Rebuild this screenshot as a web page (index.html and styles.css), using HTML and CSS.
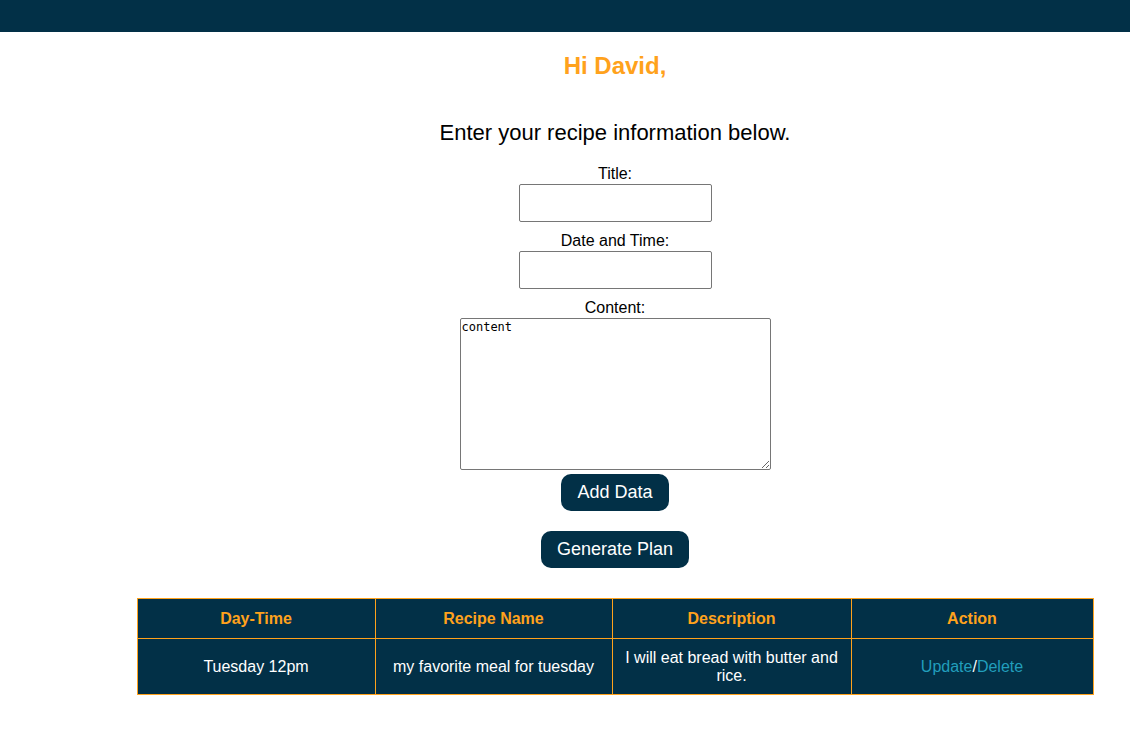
FILE: index.html
```html
<!DOCTYPE html>
<html>
<head>
<meta charset="utf-8">
<link rel="stylesheet" href="styles.css">
</head>
<body>
<div class="topbar"></div>
<main class="main">
  <h2 class="greeting">Hi David,</h2>
  <p class="intro">Enter your recipe information below.</p>
  <form class="form">
    <label class="label">Title:</label>
    <input class="field" type="text">
    <label class="label">Date and Time:</label>
    <input class="field" type="text">
    <label class="label">Content:</label>
    <textarea class="area">content</textarea>
    <button class="btn btn-add" type="button">Add Data</button>
    <button class="btn btn-plan" type="button">Generate Plan</button>
  </form>
  <table class="plan">
    <colgroup>
      <col class="c1"><col class="c2"><col class="c3"><col class="c4">
    </colgroup>
    <thead>
      <tr><th>Day-Time</th><th>Recipe Name</th><th>Description</th><th>Action</th></tr>
    </thead>
    <tbody>
      <tr>
        <td>Tuesday 12pm</td>
        <td>my favorite meal for tuesday</td>
        <td>I will eat bread with butter and rice.</td>
        <td><a class="link" href="#">Update</a>/<a class="link" href="#">Delete</a></td>
      </tr>
    </tbody>
  </table>
</main>
</body>
</html>
```

FILE: styles.css
```css
html, body {
  margin: 0;
  padding: 0;
  background: #ffffff;
  font-family: "Liberation Sans", Arial, sans-serif;
  color: #000;
}
.topbar {
  height: 32px;
  background: #023047;
}
.main {
  padding-left: 100px;
  display: flex;
  flex-direction: column;
  align-items: center;
}
.greeting {
  margin: 20px 0 0;
  font-size: 24px;
  line-height: 28px;
  font-weight: bold;
  color: #ffa21c;
}
.intro {
  margin: 40px 0 0;
  font-size: 22px;
  line-height: 25px;
}
.form {
  display: flex;
  flex-direction: column;
  align-items: center;
  margin-top: 20px;
}
.label {
  font-size: 16px;
  line-height: 18px;
  margin-top: 0;
}
.field {
  width: 193px;
  height: 38px;
  box-sizing: border-box;
  border: 1px solid #767676;
  border-radius: 2px;
  margin: 1px 0 10px;
}
.area {
  width: 311px;
  height: 152px;
  box-sizing: border-box;
  border: 1px solid #767676;
  border-radius: 2px;
  font-family: "DejaVu Sans Mono", monospace;
  font-size: 12px;
  padding: 1px;
  margin: 1px 0 0;
  resize: both;
}
.btn {
  background: #023047;
  color: #ffffff;
  border: none;
  border-radius: 10px;
  font-family: "Liberation Sans", Arial, sans-serif;
  font-size: 18px;
  line-height: 21px;
  padding: 8px 16px;
  cursor: pointer;
}
.btn-add {
  margin-top: 4px;
}
.btn-plan {
  margin-top: 20px;
}
.plan {
  margin-top: 30px;
  width: 956px;
  border-collapse: collapse;
  table-layout: fixed;
  background: #023047;
  border: 1px solid #ffa21c;
  font-size: 16px;
}
.c1 { width: 238px; }
.c2 { width: 237px; }
.c3 { width: 239px; }
.c4 { width: 242px; }
.plan th, .plan td {
  border: 1px solid #ffa21c;
  text-align: center;
  padding: 0 12px;
  line-height: 18px;
}
.plan th {
  color: #ffa21c;
  font-weight: bold;
  height: 39px;
}
.plan td {
  color: #ffffff;
  height: 55px;
}
.link {
  color: #219ebc;
  text-decoration: none;
}
```
